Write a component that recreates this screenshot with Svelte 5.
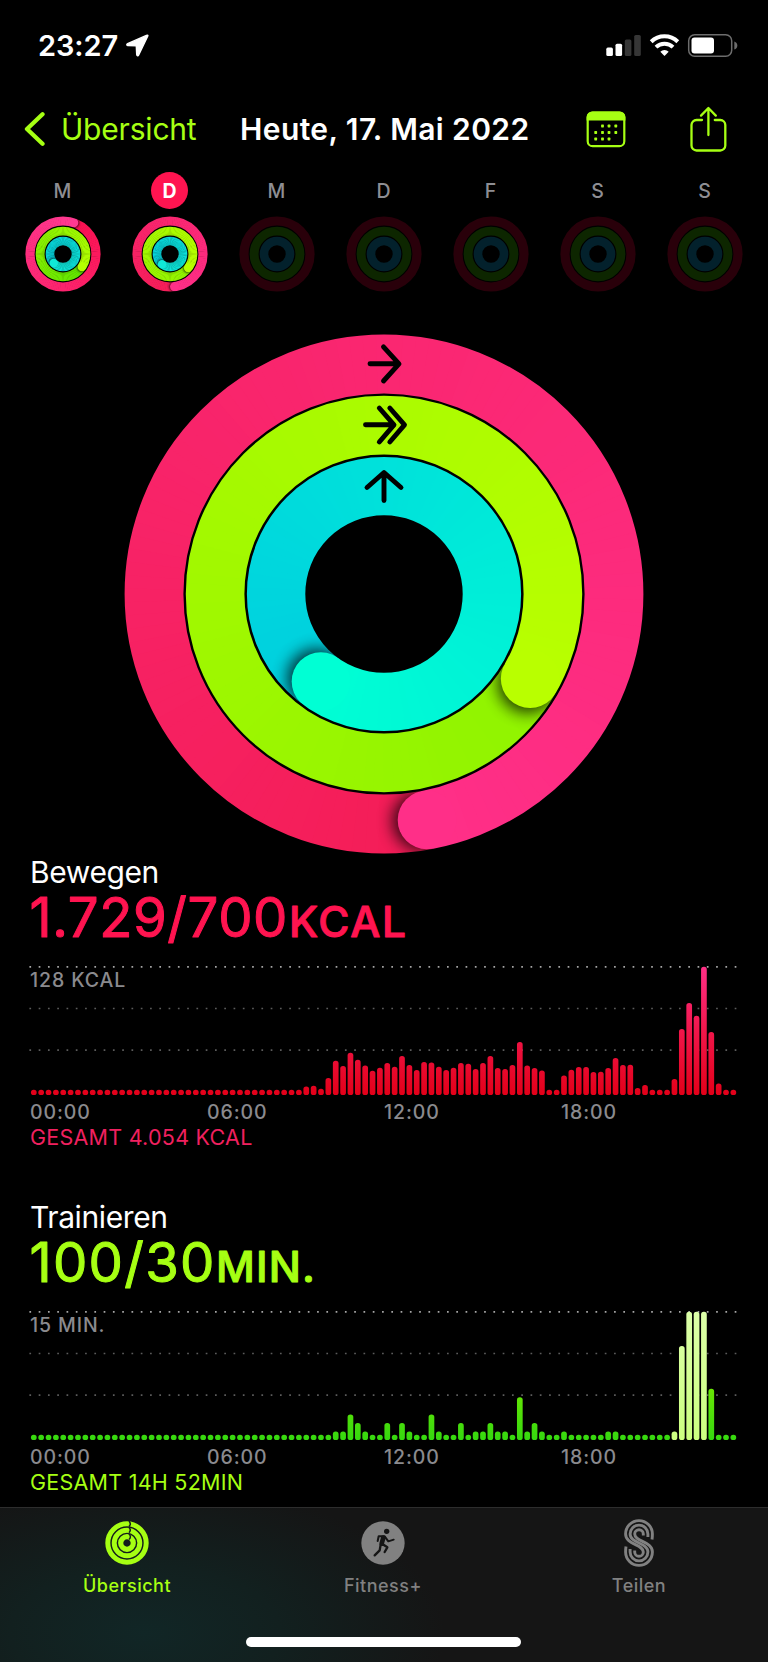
<script>
	const BAR_COUNT = 96;
	const BAR_STEP = 7.364;
	const CHART_HEIGHT = 128.4;
	const MIN_BAR = 5.4;

	const farben = {
		bewegen: ['#f41d57', '#ff2f88'],
		trainieren: ['#90f300', '#b9ff00'],
		stehen: ['#00cedf', '#00ffd4'],
		stehenKlein: ['#06d2de', '#10e8d8']
	};

	// angle: position of the ring's tip in degrees, clockwise from the top
	const grosseRinge = [
		{ id: 'bewegen', r: 230, w: 58.8, angle: 169.2, colors: farben.bewegen },
		{ id: 'trainieren', r: 168.9, w: 58.6, angle: 120.1, colors: farben.trainieren },
		{ id: 'stehen', r: 107.9, w: 58.4, angle: 215.8, colors: farben.stehen }
	];

	const kleineRadien = [
		{ r: 33, w: 9.2 },
		{ r: 22.9, w: 8.9 },
		{ r: 13, w: 8.6 }
	];

	function kleineRinge(prefix, angles, colors) {
		return kleineRadien.map((k, i) => ({ ...k, id: prefix + i, angle: angles[i], colors: colors[i] }));
	}

	const tage = [
		{ name: 'M', ringe: kleineRinge('mo', [19, 124, 226], [['#fa1150', '#ff3a92'], ['#5fe400', '#b4ff00'], farben.stehenKlein]) },
		{ name: 'D', heute: true, ringe: kleineRinge('di', [172, 127, 218], [farben.bewegen, farben.trainieren, farben.stehenKlein]) },
		{ name: 'M' },
		{ name: 'D' },
		{ name: 'F' },
		{ name: 'S' },
		{ name: 'S' }
	];
	const leereFarben = ['#29000a', '#0d2600', '#03212c'];

	const kcal = [
		8.7, 9.3, 6.4, 17, 34.3, 29, 42.3, 35.3, 29.7, 24.3, 27.3, 32, 28.3, 39, 30, 25, 33, 32.7, 28.3, 25, 27.3,
		32, 31.3, 26, 32, 39, 27, 26, 30, 53, 29.7, 27, 24.7, 0, 0, 19.7, 25.3, 28, 28, 23, 23.3, 27, 37, 30, 30.3,
		7, 10, 0, 0, 0, 16, 66, 92, 79.3, 128.4, 63, 11.7, 0, 0
	];
	const minuten = {
		41: 1, 42: 1, 43: 3, 44: 2, 45: 1, 48: 2, 50: 2, 51: 1, 54: 3, 55: 1, 58: 2, 60: 1, 61: 1, 62: 2, 63: 1,
		64: 1, 66: 5, 67: 1, 68: 2, 69: 1, 72: 1, 78: 1, 79: 1, 87: 1, 88: 11, 89: 15, 90: 15, 91: 15, 92: 6
	};

	const bewegenBalken = Array.from({ length: BAR_COUNT }, (_, i) => Math.max(kcal[i - 37] || 0, MIN_BAR));
	const trainierenBalken = Array.from({ length: BAR_COUNT }, (_, i) =>
		Math.max(((minuten[i] || 0) / 15) * CHART_HEIGHT, MIN_BAR)
	);

	const bereiche = [
		{
			id: 'move', titel: 'Bewegen', wert: '1.729/700', wertBreite: 258, einheit: 'KCAL', einheitX: 260, einheitBreite: 117,
			skala: '128 KCAL', gesamt: 'GESAMT 4.054 KCAL', balken: bewegenBalken, verlauf: ['#e30019', '#f0164a', '#ff2f86']
		},
		{
			id: 'exercise', titel: 'Trainieren', wert: '100/30', wertBreite: 185, einheit: 'MIN.', einheitX: 187, einheitBreite: 99,
			skala: '15 MIN.', gesamt: 'GESAMT 14H 52MIN', balken: trainierenBalken, verlauf: ['#35d80f', '#76ea00', '#a6ff00'],
			workout: [87, 91]
		}
	];

	const zeiten = ['00:00', '06:00', '12:00', '18:00'];
	const linien = [1.8, 43.5, 85.2];

	function punkt(r, deg) {
		const a = ((deg - 90) * Math.PI) / 180;
		return [r * Math.cos(a), r * Math.sin(a)];
	}

	function bogen(r, from, to) {
		const [x1, y1] = punkt(r, from);
		const [x2, y2] = punkt(r, to);
		return `M${x1} ${y1}A${r} ${r} 0 0 1 ${x2} ${y2}`;
	}

	function mischen([a, b], t) {
		const teil = (c, i) => parseInt(c.slice(i, i + 2), 16);
		return `rgb(${[1, 3, 5].map((i) => Math.round(teil(a, i) + (teil(b, i) - teil(a, i)) * t)).join(',')})`;
	}

	// every segment runs a little under the next one so no seam shows
	function segmente(ring, from, to) {
		const liste = [];
		for (let d = from; d < to; d += 3) {
			const start = ring.angle - 360 + d;
			liste.push({ d: bogen(ring.r, start, start + 4), farbe: mischen(ring.colors, d / 360) });
		}
		return liste;
	}
</script>

{#snippet aktivitaetsring(ring)}
	{@const spitze = punkt(ring.r, ring.angle)}
	{@const schatten = punkt(ring.r, ring.angle + (ring.w / ring.r) * 5)}
	<mask id="mask-{ring.id}" maskUnits="userSpaceOnUse" x="-270" y="-270" width="540" height="540">
		<circle r={ring.r} fill="none" stroke="#fff" stroke-width={ring.w} />
	</mask>
	<filter id="blur-{ring.id}" x="-60%" y="-60%" width="220%" height="220%">
		<feGaussianBlur stdDeviation={ring.w * 0.14} />
	</filter>
	<g mask="url(#mask-{ring.id})" fill="none" stroke-width={ring.w + 3}>
		{#each segmente(ring, 0, 300) as s}
			<path d={s.d} stroke={s.farbe} />
		{/each}
		<circle cx={schatten[0]} cy={schatten[1]} r={ring.w / 2} fill="#000" stroke="none" opacity="0.8" filter="url(#blur-{ring.id})" />
		{#each segmente(ring, 300, 357) as s}
			<path d={s.d} stroke={s.farbe} />
		{/each}
		<path d={bogen(ring.r, ring.angle - 3, ring.angle)} stroke={ring.colors[1]} />
		<circle cx={spitze[0]} cy={spitze[1]} r={ring.w / 2} fill={ring.colors[1]} stroke="none" />
	</g>
{/snippet}

<div class="screen">
	<header class="status">
		<span class="clock">23:27</span>
		<svg class="location" width="23" height="23" viewBox="0 0 23 23">
			<path d="M21 1.2 1.6 9.7c-1.2.6-.9 1.7.3 1.8l8.4.4.4 8.6c.1 1.4 1.4 1.7 2 .4L21.8 2c.3-.7-.2-1.1-.8-.8Z" fill="#fff" stroke="#fff" stroke-width="1.4" stroke-linejoin="round" />
		</svg>
		<svg class="system" width="132" height="26" viewBox="0 0 132 26">
			<g fill="#fff">
				<rect x="0.3" y="14.6" width="6.6" height="8.4" rx="1.6" />
				<rect x="9.5" y="10.7" width="6.6" height="12.3" rx="1.6" />
				<rect x="18.8" y="6.5" width="6.6" height="16.5" rx="1.6" fill="#363636" />
				<rect x="28.2" y="2" width="6.6" height="21" rx="1.6" fill="#363636" />
			</g>
			<g fill="none" stroke="#fff" stroke-width="4">
				<path d="M45.2 8.7a19.2 19.2 0 0 1 26.6 0" />
				<path d="M50 14.1a12.4 12.4 0 0 1 17 0" />
			</g>
			<path d="M58.5 23 54.3 18.8a6 6 0 0 1 8.4 0Z" fill="#fff" />
			<rect x="82.7" y="1.7" width="43" height="21.6" rx="6" fill="none" stroke="#6d6d6d" stroke-width="1.5" />
			<rect x="85.5" y="4.5" width="22.5" height="16" rx="3" fill="#fff" />
			<path d="M128.3 8.5q3 1 3 4t-3 4Z" fill="#6d6d6d" />
		</svg>
	</header>

	<nav class="top">
		<svg width="22" height="36" viewBox="0 0 22 36">
			<path d="M18.5 3.2 3 18 18.5 32.8" fill="none" stroke="#a6ff13" stroke-width="4.3" stroke-linecap="round" stroke-linejoin="round" />
		</svg>
		<span class="back">Übersicht</span>
		<h1>Heute, 17. Mai 2022</h1>
		<svg class="calendar" width="40" height="37" viewBox="0 0 40 37">
			<rect x="1.7" y="1.5" width="36.6" height="33.7" rx="5" fill="none" stroke="#a6ff13" stroke-width="2.2" />
			<path d="M.6 9.5V6A5.6 5.6 0 0 1 6.2.4h27.6A5.6 5.6 0 0 1 39.4 6v3.5Z" fill="#a6ff13" />
			<g fill="#a6ff13">
				{#each [[16.5, 15], [23, 15], [29.8, 15], [9.7, 21.5], [16.5, 21.5], [23, 21.5], [29.8, 21.5], [9.7, 28], [16.5, 28], [23, 28]] as [x, y]}
					<rect x={x - 1.4} y={y - 1.4} width="2.8" height="2.8" rx="0.6" />
				{/each}
			</g>
		</svg>
		<svg class="share" width="37" height="46" viewBox="0 0 37 46">
			<g fill="none" stroke="#a6ff13" stroke-width="2.3" stroke-linecap="round" stroke-linejoin="round">
				<path d="M12 14H6.5a5 5 0 0 0-5 5v20.5a5 5 0 0 0 5 5h23.8a5 5 0 0 0 5-5V19a5 5 0 0 0-5-5H24.8" />
				<path d="M18.4 29V2.5M11 9.6l7.4-7.6 7.4 7.6" />
			</g>
		</svg>
	</nav>

	<section class="week">
		{#each tage as tag}
			<div class="day">
				<span class="letter" class:today={tag.heute}>{tag.name}</span>
				<svg width="76" height="76" viewBox="-38 -38 76 76">
					{#if tag.ringe}
						{#each tag.ringe as ring}
							{@render aktivitaetsring(ring)}
						{/each}
					{:else}
						{#each kleineRadien as k, i}
							<circle r={k.r} fill="none" stroke={leereFarben[i]} stroke-width={k.w} />
						{/each}
					{/if}
				</svg>
			</div>
		{/each}
	</section>

	<svg class="rings" width="520" height="520" viewBox="-260 -260 520 520">
		{#each grosseRinge as ring}
			{@render aktivitaetsring(ring)}
		{/each}
		<g fill="none" stroke="#000" stroke-width="4.9" stroke-linecap="round" stroke-linejoin="round">
			<path d="M-14-230.2H14.5M-.5-247.2 15-230.2-.5-213" />
			<path d="M-18.5-169.2H9M-4.7-186 10-169.2-4.7-152M5.8-186 20.5-169.2 5.8-152" />
			<path d="M0-93.5V-121M-17-106.5 0-121.5 17-106.5" />
		</g>
	</svg>

	{#each bereiche as b}
		<section class="metric">
			<h2>{b.titel}</h2>
			<svg class="value {b.id}" width="420" height="58" viewBox="0 0 420 58">
				<text x="0.5" y="47.3" font-size="54.5" textLength={b.wertBreite}>{b.wert}</text>
				<text class="unit" x={b.einheitX} y="47.3" font-size="42.5" textLength={b.einheitBreite}>{b.einheit}</text>
			</svg>
			<div class="chart">
				<svg width="708" height="131" viewBox="0 0 708 131">
					<defs>
						<linearGradient id="grad-{b.id}" gradientUnits="userSpaceOnUse" x1="0" y1="130" x2="0" y2="1.6">
							<stop offset="0" stop-color={b.verlauf[0]} />
							<stop offset="0.5" stop-color={b.verlauf[1]} />
							<stop offset="1" stop-color={b.verlauf[2]} />
						</linearGradient>
						<linearGradient id="workout-{b.id}" gradientUnits="userSpaceOnUse" x1="0" y1="130" x2="0" y2="1.6">
							<stop offset="0" stop-color="#ccff80" />
							<stop offset="1" stop-color="#dcffa8" />
						</linearGradient>
					</defs>
					{#each linien as y, zeile}
						<line x1="0.4" x2="707.4" y1={y} y2={y} stroke={zeile ? '#5c5c5c' : '#a6a6a6'} stroke-width="1.7" stroke-dasharray="1.7 7.58" />
					{/each}
					{#each b.balken as h, i}
						<rect
							x={1.95 + i * BAR_STEP}
							y={130.1 - h}
							width="5.7"
							height={h}
							rx="2.7"
							fill="url(#{b.workout && i >= b.workout[0] && i <= b.workout[1] ? 'workout' : 'grad'}-{b.id})"
						/>
					{/each}
				</svg>
				<span class="scale">{b.skala}</span>
			</div>
			<div class="hours">
				{#each zeiten as z}
					<span>{z}</span>
				{/each}
			</div>
			<p class="total {b.id}">{b.gesamt}</p>
		</section>
	{/each}

	<footer>
		<div class="tabs">
			<div class="tab active">
				<svg width="48" height="48" viewBox="-24 -24 48 48">
					<g fill="none" stroke="#a6ff13">
						<circle r="19.2" stroke-width="5" />
						<circle r="12.8" stroke-width="4.9" />
						<circle r="6.3" stroke-width="5.2" />
					</g>
					<path d="M2-22q2.6 3 0 5.6M2-15.5q2.6 2.5 0 5.3M2-9q2.8 2.5 0 5.5" fill="none" stroke="#16201a" stroke-width="1.5" />
				</svg>
				<span>Übersicht</span>
			</div>
			<div class="tab">
				<svg width="48" height="48" viewBox="26 26 144 144">
					<circle cx="98" cy="98" r="65" fill="#818181" />
					<circle cx="109" cy="63" r="8" fill="#151515" />
					<g fill="none" stroke="#151515" stroke-linecap="round" stroke-linejoin="round">
						<path d="M82 92l3-14 18 0 11 15 16-5" stroke-width="6" />
						<path d="M99 82l-5 18" stroke-width="14" />
						<path d="M95 100l16 11-8 14M91 103l-3 17-15 15" stroke-width="7" />
					</g>
				</svg>
				<span>Fitness+</span>
			</div>
			<div class="tab">
				<svg width="30" height="48" viewBox="0 0 30 48">
					<g fill="none" stroke="#818181" stroke-width="2.9">
						<path d="M28 20.5Q28.4 18 28.4 15A13.4 13.4 0 0 0 1.6 15C1.6 26 19.3 25 19.3 33A4.3 4.3 0 0 1 10.7 33V31.5" />
						<path d="M23.9 18V15A8.9 8.9 0 0 0 6.1 15C6.1 24.5 23.9 23.5 23.9 33A8.9 8.9 0 0 1 6.1 33V30" />
						<path d="M19.3 16.5V15A4.3 4.3 0 0 0 10.7 15C10.7 23 28.4 22 28.4 33A13.4 13.4 0 0 1 1.6 33Q1.6 30 2 27.5" />
					</g>
				</svg>
				<span>Teilen</span>
			</div>
		</div>
		<div class="home"></div>
	</footer>
</div>

<style>
	:global(body) {
		background: #000;
	}

	.screen {
		width: 768px;
		height: 1662px;
		overflow: hidden;
		display: flex;
		flex-direction: column;
		background: #000;
		color: #fff;
		font-family: Inter, "Liberation Sans", sans-serif;
	}

	svg {
		display: block;
		flex: none;
	}

	h1, h2, p {
		margin: 0;
	}

	.status {
		display: flex;
		align-items: center;
		height: 91px;
		padding: 0 30px 0 38px;
	}

	.clock {
		width: 88px;
		font-size: 29px;
		font-weight: 600;
		letter-spacing: -0.1px;
		white-space: nowrap;
	}

	.system {
		margin-left: auto;
	}

	.top {
		display: flex;
		align-items: center;
		height: 76px;
		margin-bottom: 2px;
		padding: 0 41px 0 24px;
		white-space: nowrap;
	}

	.back {
		width: 178px;
		margin-left: 15px;
		color: #a6ff13;
		font-size: 30px;
		letter-spacing: -0.2px;
	}

	h1 {
		width: 346px;
		margin-left: 1px;
		font-size: 30px;
		font-weight: 600;
		letter-spacing: 0.4px;
	}

	.share {
		margin-left: auto;
	}

	.week {
		display: grid;
		grid-template-columns: repeat(7, 107px);
		padding-left: 9px;
		height: 166px;
	}

	.day {
		display: flex;
		flex-direction: column;
		align-items: center;
		padding-top: 3px;
		gap: 7px;
	}

	.letter {
		width: 37px;
		height: 37px;
		line-height: 38px;
		border-radius: 50%;
		text-align: center;
		font-size: 19.5px;
		font-weight: 500;
		color: #8e8e93;
	}

	.today {
		background: #ff1450;
		color: #fff;
		font-weight: 700;
	}

	.rings {
		margin: -1px auto 0;
	}

	.metric {
		height: 345px;
		padding-left: 29px;
	}

	h2 {
		height: 36px;
		padding-left: 1px;
		line-height: 37px;
		font-size: 30px;
		font-weight: 400;
		letter-spacing: -0.4px;
	}

	.value {
		overflow: visible;
		font-weight: 400;
		stroke-width: 1px;
		stroke-linejoin: round;
		margin-bottom: 17px;
	}

	.unit {
		font-weight: 500;
	}

	.move {
		color: #f0205f;
		fill: #ff1450;
		stroke: #ff1450;
	}

	.exercise {
		color: #a6ff13;
		fill: #a6ff13;
		stroke: #a6ff13;
	}

	.chart {
		position: relative;
		height: 131px;
	}

	.scale {
		position: absolute;
		left: 1px;
		top: 3px;
		font-size: 19.5px;
		line-height: 25px;
		font-weight: 500;
		letter-spacing: 0.9px;
		color: #8a8a8e;
	}

	.hours {
		display: grid;
		grid-template-columns: repeat(4, 177px);
		padding-left: 1px;
		margin-top: 4px;
		line-height: 24px;
		font-size: 19.5px;
		font-weight: 500;
		letter-spacing: 0.9px;
		color: #8a8a8e;
	}

	.total {
		padding-left: 1px;
		font-size: 21.5px;
		line-height: 26px;
		letter-spacing: 0.25px;
	}

	footer {
		position: absolute;
		left: 0;
		top: 1507px;
		width: 768px;
		height: 155px;
		box-sizing: border-box;
		border-top: 1px solid #2d2d2d;
		background: radial-gradient(ellipse 300px 150px at 145px 125px, #112626, #12201f 45%, #151515 100%);
	}

	.tabs {
		display: grid;
		grid-template-columns: repeat(3, 256px);
		height: 129px;
		margin-left: -1px;
	}

	.tab {
		display: flex;
		flex-direction: column;
		align-items: center;
		padding-top: 10.5px;
		gap: 6px;
		font-size: 18px;
		line-height: 26px;
		font-weight: 450;
		letter-spacing: 0.5px;
		color: #818181;
	}

	.active {
		color: #a6ff13;
	}

	.home {
		width: 275px;
		height: 10px;
		margin-left: 246px;
		border-radius: 5px;
		background: #fff;
	}
</style>
